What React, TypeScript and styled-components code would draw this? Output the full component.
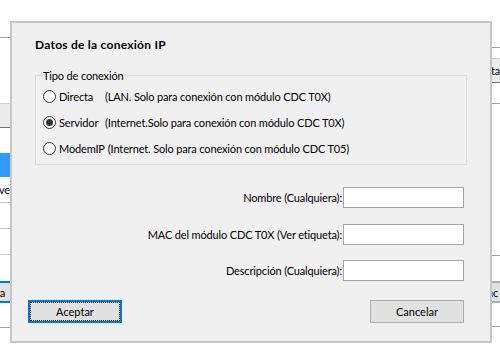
import React from 'react';
import styled, { createGlobalStyle, css } from 'styled-components';

const GlobalStyle = createGlobalStyle`
  html, body {
    margin: 0;
    padding: 0;
    background: #ffffff;
  }
  body {
    font-family: Lato, 'Liberation Sans', sans-serif;
    font-size: 11px;
    letter-spacing: -0.15px;
    color: #000000;
  }
  * {
    box-sizing: border-box;
  }
`;

const radioOptions = [
  { label: 'Directa', detail: '(LAN. Solo para conexión con módulo CDC T0X)', width: 43, checked: false },
  { label: 'Servidor', detail: '(Internet.Solo para conexión con módulo CDC T0X)', width: 43, checked: true },
  { label: 'ModemIP', detail: '(Internet. Solo para conexión con módulo CDC T05)', width: 0, checked: false },
];

const fields = [
  'Nombre (Cualquiera):',
  'MAC del módulo CDC T0X (Ver etiqueta):',
  'Descripción (Cualquiera):',
];

const App = () => (
  <>
    <GlobalStyle />
    <Page>
      <LeftPane>
        <PaneRule $top={37} />
        <HeaderCell $top={65} />
        <SelectedRow $top={25} />
        <ListRow>Clave</ListRow>
        <ListRow />
        <ListRow />
        <PaneButton $top={26} $focused>Nueva</PaneButton>
        <PaneRule $top={24} />
      </LeftPane>
      <RightPane>
        <PaneRule $top={47} />
        <HeaderCell $top={10}>Cuenta</HeaderCell>
        <PaneRule $top={20} />
        <PaneRule $top={151} />
        <PaneButton $top={25}>Sinc</PaneButton>
        <PaneRule $top={23} />
      </RightPane>

      <Dialog>
        <Title>Datos de la conexión IP</Title>
        <GroupBox>
          <Legend>Tipo de conexión</Legend>
          {radioOptions.map((option) => (
            <RadioRow key={option.label}>
              <RadioMark $checked={option.checked} />
              <RadioLabel $width={option.width}>{option.label}</RadioLabel>
              <span>{option.detail}</span>
            </RadioRow>
          ))}
        </GroupBox>
        <FieldGrid>
          {fields.map((field) => (
            <React.Fragment key={field}>
              <FieldLabel>{field}</FieldLabel>
              <TextBox />
            </React.Fragment>
          ))}
        </FieldGrid>
        <ButtonBar>
          <DialogButton $default>Aceptar</DialogButton>
          <DialogButton>Cancelar</DialogButton>
        </ButtonBar>
      </Dialog>
    </Page>
  </>
);

const Page = styled.div`
  position: relative;
  width: 500px;
  height: 360px;
  display: flex;
  justify-content: space-between;
  overflow: hidden;
  background: #ffffff;
`;

const Pane = styled.div`
  display: flex;
  flex-direction: column;
  overflow: hidden;
`;

const LeftPane = styled(Pane)`
  width: 10px;
`;

const RightPane = styled(Pane)`
  width: 8px;
`;

interface OffsetProps {
  $top?: number;
}

const PaneRule = styled.div<OffsetProps>`
  flex: none;
  height: 1px;
  margin-top: ${(p) => p.$top ?? 0}px;
  background: #a0a0a0;
`;

const HeaderCell = styled.div<OffsetProps>`
  flex: none;
  height: 25px;
  margin-top: ${(p) => p.$top ?? 0}px;
  display: flex;
  align-items: center;
  justify-content: flex-end;
  background: #ececec;
  border-top: 1px solid #d0d0d0;
  border-bottom: 1px solid #707070;
  white-space: nowrap;
`;

const SelectedRow = styled.div<OffsetProps>`
  flex: none;
  height: 24px;
  margin-top: ${(p) => p.$top ?? 0}px;
  background: #3399ff;
`;

const ListRow = styled.div`
  flex: none;
  height: 26px;
  display: flex;
  align-items: center;
  justify-content: flex-end;
  border-bottom: 1px solid #c8c8c8;
  white-space: nowrap;
`;

const PaneButton = styled.div<OffsetProps & { $focused?: boolean }>`
  flex: none;
  height: 22px;
  margin-top: ${(p) => p.$top ?? 0}px;
  display: flex;
  align-items: center;
  justify-content: flex-end;
  padding-right: ${(p) => (p.$focused ? 5 : 2)}px;
  background: #e1e1e1;
  white-space: nowrap;
  border-top: 2px solid ${(p) => (p.$focused ? '#0078d7' : '#adadad')};
  border-bottom: 2px solid ${(p) => (p.$focused ? '#0078d7' : '#adadad')};
`;

const Dialog = styled.div`
  position: absolute;
  left: 10px;
  top: 21px;
  width: 482px;
  display: flex;
  flex-direction: column;
  background: #f0f0f0;
  border: 2px solid #c6c6c6;
  padding: 14px 0 18px;
`;

const Title = styled.div`
  padding-left: 23px;
  font-size: 12px;
  font-weight: bold;
  letter-spacing: 0.25px;
  line-height: 15px;
`;

const GroupBox = styled.fieldset`
  margin: 16px 23px 0;
  padding: 0 6px 3px;
  border: 1px solid #dcdcdc;
  min-width: 0;
`;

const Legend = styled.legend`
  padding: 0 1px;
  line-height: 15px;
`;

const RadioRow = styled.div`
  height: 26px;
  display: flex;
  align-items: center;
  padding-left: 1px;
  white-space: nowrap;
`;

const RadioMark = styled.span<{ $checked?: boolean }>`
  position: relative;
  flex: none;
  width: 13px;
  height: 13px;
  margin-right: 3px;
  border-radius: 50%;
  border: 1px solid #333333;
  background: #ffffff;

  &::after {
    content: '';
    position: absolute;
    inset: 2px;
    border-radius: 50%;
    background: ${(p) => (p.$checked ? '#333333' : 'transparent')};
  }
`;

const RadioLabel = styled.span<{ $width: number }>`
  flex: none;
  min-width: ${(p) => p.$width}px;
  margin-right: 3px;
`;

const FieldGrid = styled.div`
  margin-top: 22px;
  padding-right: 26px;
  display: grid;
  grid-template-columns: 1fr 121px;
  column-gap: 1px;
  row-gap: 15.5px;
  align-items: center;
`;

const FieldLabel = styled.span`
  justify-self: end;
  white-space: nowrap;
`;

const TextBox = styled.input.attrs({ type: 'text' })`
  width: 121px;
  height: 21px;
  margin: 0;
  padding: 0 3px;
  border: 1px solid #a5a5a5;
  background: #ffffff;
  font: inherit;
  outline: none;
`;

const ButtonBar = styled.div`
  margin-top: 19px;
  padding: 0 26px 0 16px;
  display: flex;
  justify-content: space-between;
`;

const DialogButton = styled.button<{ $default?: boolean }>`
  position: relative;
  width: 94px;
  height: 23px;
  margin: 0;
  padding: 0;
  font: inherit;
  color: #000000;
  background: #e1e1e1;
  border: 1px solid #adadad;

  ${(p) =>
    p.$default &&
    css`
      border: 2px solid #0078d7;

      &::after {
        content: '';
        position: absolute;
        inset: 0;
        border: 1px dotted #000000;
      }
    `}
`;

export default App;
